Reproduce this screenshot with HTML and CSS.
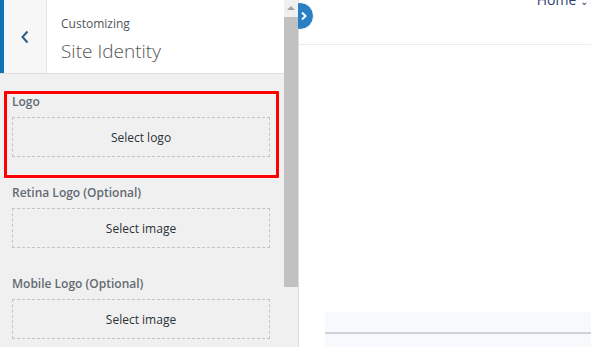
FILE: index.html
```html
<!DOCTYPE html>
<html lang="en">
<head>
    <meta charset="UTF-8">
    <meta name="viewport" content="width=device-width, initial-scale=1.0">
    <title>Customizing Site Identity</title>
    <link rel="stylesheet" href="styles.css">
</head>
<body>
    <div class="sidebar">
        <div class="sidebar-main">
            <div class="header">
                <button class="back" aria-label="Back">
                    <svg width="10" height="14" viewBox="0 0 10 14">
                        <path d="M7.5 1.5 L2.5 7 L7.5 12.5" fill="none" stroke="#2c5f86" stroke-width="2"/>
                    </svg>
                </button>
                <div class="title">
                    <span class="eyebrow">Customizing</span>
                    <h1>Site Identity</h1>
                </div>
            </div>
            <div class="controls">
                <div class="control highlighted">
                    <label>Logo</label>
                    <button class="select">Select logo</button>
                </div>
                <div class="control">
                    <label>Retina Logo (Optional)</label>
                    <button class="select">Select image</button>
                </div>
                <div class="control">
                    <label>Mobile Logo (Optional)</label>
                    <button class="select">Select image</button>
                </div>
            </div>
        </div>
        <div class="scrollbar">
            <div class="scroll-up"></div>
            <div class="scroll-thumb"></div>
        </div>
        <span class="collapse">
            <svg width="10" height="10" viewBox="0 0 10 10">
                <path d="M3 1.5 L6.5 5 L3 8.5" fill="none" stroke="#fff" stroke-width="2"/>
            </svg>
        </span>
    </div>
    <div class="preview">
        <div class="site-header">
            <nav class="menu">Home <span class="caret">&#8964;</span></nav>
        </div>
        <div class="site-body"></div>
        <div class="site-footer">
            <div class="footer-line"></div>
        </div>
    </div>
</body>
</html>
```

FILE: styles.css
```css
body {
    margin: 0;
    display: flex;
    height: 347px;
    overflow: hidden;
    font-family: "Open Sans", "Noto Sans", sans-serif;
    background-color: #fff;
}
.sidebar {
    position: relative;
    width: 298px;
    display: flex;
    background-color: #f0f0f0;
    border-right: 1px solid #dcdcde;
    flex-shrink: 0;
}
.sidebar-main {
    width: 284px;
    display: flex;
    flex-direction: column;
    overflow: hidden;
}
.header {
    display: flex;
    height: 73px;
    flex-shrink: 0;
    border-bottom: 1px solid #dcdcde;
    background-color: #fff;
}
.back {
    width: 47px;
    border: none;
    border-left: 4px solid #0f72b2;
    border-right: 1px solid #e4e4e4;
    background-color: #f7f7f7;
    padding: 0;
    display: flex;
    align-items: center;
    justify-content: center;
    cursor: pointer;
}
.title {
    padding: 16px 0 0 14px;
    display: flex;
    flex-direction: column;
}
.eyebrow {
    font-size: 12px;
    color: #50575e;
    line-height: 16px;
}
.title h1 {
    margin: 7px 0 0 0;
    font-size: 19px;
    font-weight: 300;
    line-height: 24px;
    color: #555;
}
.controls {
    padding-top: 17px;
    display: flex;
    flex-direction: column;
    flex-shrink: 0;
}
.control {
    padding: 0 14px 0 12px;
    margin-bottom: 28px;
    flex-shrink: 0;
}
.control.highlighted {
    margin: 0 5px 7px 4px;
    padding: 0 6px 18px 5px;
    border: 3px solid #f00;
    border-radius: 1px;
}
.control label {
    display: block;
    font-size: 12px;
    font-weight: 600;
    color: #636a72;
    line-height: 16px;
    margin: 0 0 7px 0;
}
.select {
    width: 100%;
    height: 40px;
    border: 1px dashed #c3c4c7;
    background-color: transparent;
    font-family: inherit;
    font-size: 12px;
    color: #2c3338;
    cursor: pointer;
}
.control.highlighted .select {
    width: 258px;
}
.scrollbar {
    position: relative;
    z-index: 1;
    width: 14px;
    display: flex;
    flex-direction: column;
    align-items: center;
    background-color: #f0f0f0;
}
.scroll-up {
    margin-top: 6px;
    width: 0;
    height: 0;
    border-left: 4px solid transparent;
    border-right: 4px solid transparent;
    border-bottom: 4px solid #a3a3a3;
}
.scroll-thumb {
    margin-top: 7px;
    width: 14px;
    height: 270px;
    background-color: #c1c1c1;
}
.collapse {
    position: absolute;
    top: 2px;
    left: 286px;
    width: 28px;
    height: 28px;
    box-sizing: border-box;
    padding-left: 8px;
    border-radius: 50%;
    background-color: #2a7ec3;
    border: 1px solid #fff;
    display: flex;
    align-items: center;
    justify-content: center;
}
.preview {
    flex: 1;
    display: flex;
    flex-direction: column;
}
.site-header {
    height: 44px;
    flex-shrink: 0;
    border-bottom: 1px solid #ececec;
    display: flex;
    justify-content: flex-end;
}
.menu {
    margin-top: -8px;
    padding-right: 3px;
    font-size: 14px;
    color: #2d3e6e;
    line-height: 16px;
}
.caret {
    font-size: 10px;
}
.site-body {
    flex: 1;
}
.site-footer {
    margin-left: 26px;
    height: 35px;
    flex-shrink: 0;
    background-color: #f7f9fc;
    padding-top: 20px;
    box-sizing: border-box;
}
.footer-line {
    height: 2px;
    background-color: #ccd2d8;
}
```
